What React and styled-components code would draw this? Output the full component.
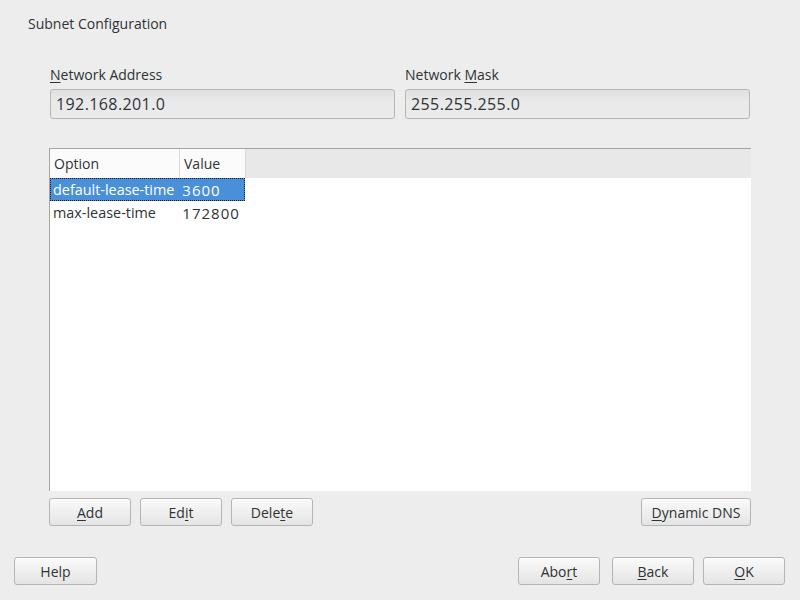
import styled, { createGlobalStyle } from "styled-components";

const GlobalStyle = createGlobalStyle`
  html, body {
    margin: 0;
    padding: 0;
    background: #ededed;
  }
  body {
    font-family: "Open Sans", "Liberation Sans", sans-serif;
    font-size: 14px;
    color: #2e3436;
  }
`;

const Window = styled.div`
  width: 800px;
  height: 600px;
  box-sizing: border-box;
  display: flex;
  flex-direction: column;
  background: #ededed;
`;

const Title = styled.div`
  padding: 14px 0 0 28px;
  height: 20px;
  line-height: 20px;
  font-size: 14px;
`;

const Content = styled.div`
  flex: 1;
  display: flex;
  flex-direction: column;
  padding: 31px 49px 0 49px;
`;

const FieldRow = styled.div`
  display: grid;
  grid-template-columns: 1fr 1fr;
  gap: 10px;
  padding: 0 1px;
`;

const Field = styled.div`
  display: flex;
  flex-direction: column;
  gap: 4px;
`;

const Label = styled.div`
  line-height: 20px;
  font-size: 14px;
`;

const Input = styled.div`
  height: 30px;
  box-sizing: border-box;
  border: 1px solid #b6b6b3;
  border-radius: 3px;
  background: linear-gradient(#e0e0e0, #e9e9e9 40%, #ebebeb);
  padding: 0 5px;
  display: flex;
  align-items: center;
  font-size: 16px;
  letter-spacing: 0.4px;
  color: #2e3436;
`;

const Table = styled.div`
  margin-top: 29px;
  height: 342px;
  border-top: 1px solid #a4a4a4;
  border-left: 1px solid #a4a4a4;
  background: #fff;
  display: flex;
  flex-direction: column;
`;

const HeaderRow = styled.div`
  display: flex;
  height: 29px;
  background: #e8e8e8;
`;

const HeaderCell = styled.div`
  width: ${(p) => p.$w}px;
  box-sizing: border-box;
  background: #fbfbfb;
  border-right: 1px solid #dadada;
  padding-left: 4px;
  display: flex;
  align-items: center;
  font-size: 14px;
`;

const Row = styled.div`
  display: flex;
  height: 23px;
  width: 195px;
  box-sizing: border-box;
  background: ${(p) => (p.$selected ? "#4a90d9" : "transparent")};
  color: ${(p) => (p.$selected ? "#ffffff" : "#2e3436")};
  border: 1px ${(p) => (p.$selected ? "dotted #1a1a1a" : "solid transparent")};
`;

const Cell = styled.div`
  width: ${(p) => p.$w}px;
  box-sizing: border-box;
  padding-left: ${(p) => p.$pad}px;
  display: flex;
  align-items: center;
  font-size: ${(p) => (p.$num ? 15 : 14.4)}px;
  letter-spacing: ${(p) => (p.$num ? 1 : 0)}px;
  white-space: nowrap;
`;

const ButtonBar = styled.div`
  display: flex;
  gap: 9px;
  margin-top: 7px;
`;

const Spacer = styled.div`
  flex: 1;
`;

const Button = styled.button`
  width: ${(p) => p.$w || 82}px;
  height: 28px;
  box-sizing: border-box;
  border: 1px solid #b4b4b2;
  border-radius: 3px;
  background: linear-gradient(#fafafa, #ededed 60%, #e4e4e4);
  font-family: "Open Sans", "Liberation Sans", sans-serif;
  font-size: 14px;
  color: #2e3436;
  padding: 0;
  display: flex;
  align-items: center;
  justify-content: center;
  box-shadow: inset 0 1px 0 #ffffff;
`;

const Key = styled.span`
  text-decoration: underline;
  text-underline-offset: 2px;
`;

const Footer = styled.div`
  display: flex;
  padding: 0 15px 15px 14px;
  align-items: center;
`;

const FooterGroup = styled.div`
  display: flex;
  gap: ${(p) => p.$gap || 9}px;
`;

const Label2 = ({ text, k }) => {
  const i = text.indexOf(k);
  if (i < 0) return text;
  return (
    <>
      {text.slice(0, i)}
      <Key>{k}</Key>
      {text.slice(i + k.length)}
    </>
  );
};

const rows = [
  { option: "default-lease-time", value: "3600", selected: true },
  { option: "max-lease-time", value: "172800" },
];

export default function App() {
  return (
    <Window>
      <GlobalStyle />
      <Title>Subnet Configuration</Title>
      <Content>
        <FieldRow>
          <Field>
            <Label>
              <Label2 text="Network Address" k="N" />
            </Label>
            <Input>192.168.201.0</Input>
          </Field>
          <Field>
            <Label>
              <Label2 text="Network Mask" k="M" />
            </Label>
            <Input>255.255.255.0</Input>
          </Field>
        </FieldRow>
        <Table>
          <HeaderRow>
            <HeaderCell $w={130}>Option</HeaderCell>
            <HeaderCell $w={66}>Value</HeaderCell>
          </HeaderRow>
          {rows.map((r) => (
            <Row key={r.option} $selected={r.selected}>
              <Cell $w={130} $pad={2}>
                {r.option}
              </Cell>
              <Cell $w={64} $pad={2} $num>
                {r.value}
              </Cell>
            </Row>
          ))}
        </Table>
        <ButtonBar>
          <Button>
            <Label2 text="Add" k="A" />
          </Button>
          <Button>
            <Label2 text="Edit" k="i" />
          </Button>
          <Button>
            <Label2 text="Delete" k="t" />
          </Button>
          <Spacer />
          <Button $w={110}>
            <Label2 text="Dynamic DNS" k="D" />
          </Button>
        </ButtonBar>
        <Spacer />
      </Content>
      <Footer>
        <Button $w={83}>Help</Button>
        <Spacer />
        <FooterGroup $gap={12}>
          <Button>
            <Label2 text="Abort" k="r" />
          </Button>
          <FooterGroup $gap={9}>
            <Button>
              <Label2 text="Back" k="B" />
            </Button>
            <Button>
              <Label2 text="OK" k="O" />
            </Button>
          </FooterGroup>
        </FooterGroup>
      </Footer>
    </Window>
  );
}
